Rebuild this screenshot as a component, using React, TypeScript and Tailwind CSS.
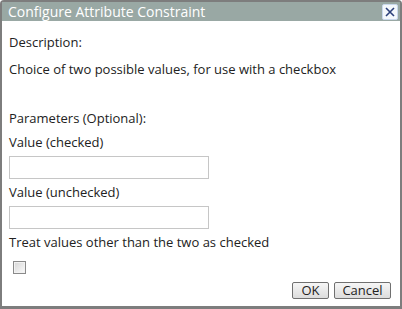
function CloseButton() {
  return (
    <button className="flex h-[16px] w-[16px] items-center justify-center rounded-[2px] border border-[#c9d8ec] bg-[#f4f8fd]">
      <svg width="10" height="10" viewBox="0 0 10 10">
        <path d="M1 1L9 9M9 1L1 9" stroke="#2b3f7a" strokeWidth="1.6" />
      </svg>
    </button>
  )
}

function Field({ label, className }: { label: string; className?: string }) {
  return (
    <div className={`flex flex-col ${className ?? ''}`}>
      <label className="flex h-[26px] items-center">{label}</label>
      <input
        type="text"
        className="h-[23px] w-[200px] border border-[#c6c6c6] bg-white px-1 outline-none"
      />
    </div>
  )
}

export default function App() {
  return (
    <div className="flex h-[309px] w-[402px] flex-col rounded-t-[4px] bg-[#7d7d7d] px-[2px] pb-[3px] pt-[2px] font-['Open_Sans',sans-serif] text-[13px] text-[#222]">
      <div className="flex h-[19px] items-center justify-between bg-[#99a8a4] pl-[6px] pr-[2px]">
        <span className="text-[14px] leading-[19px] text-white">Configure Attribute Constraint</span>
        <CloseButton />
      </div>
      <div className="flex flex-1 flex-col bg-white px-[7px]">
        <p className="mt-[11px] leading-[20px]">Description:</p>
        <p className="mt-[7px] leading-[20px]">Choice of two possible values, for use with a checkbox</p>
        <p className="mt-[29px] leading-[20px]">Parameters (Optional):</p>
        <Field label="Value (checked)" className="mt-[2px]" />
        <Field label="Value (unchecked)" className="mt-[1px]" />
        <p className="mt-[3px] leading-[20px]">Treat values other than the two as checked</p>
        <div className="mt-[9px] pl-[4px]">
          <input
            type="checkbox"
            className="m-0 block h-[13px] w-[13px] appearance-none border border-[#8a8a8a] bg-[linear-gradient(135deg,#d6d6d6,#fbfbfb)] shadow-[inset_0_0_0_1px_#f2f2f2]"
          />
        </div>
        <div className="mt-auto mb-[7px] flex justify-end gap-[5px] pr-[2px]">
          <button className="h-[17px] w-[37px] rounded-[2px] border border-[#707070] bg-[linear-gradient(#f6f6f6,#dcdcdc)] leading-[15px]">OK</button>
          <button className="h-[17px] w-[57px] rounded-[2px] border border-[#707070] bg-[linear-gradient(#f6f6f6,#dcdcdc)] leading-[15px]">Cancel</button>
        </div>
      </div>
    </div>
  )
}
